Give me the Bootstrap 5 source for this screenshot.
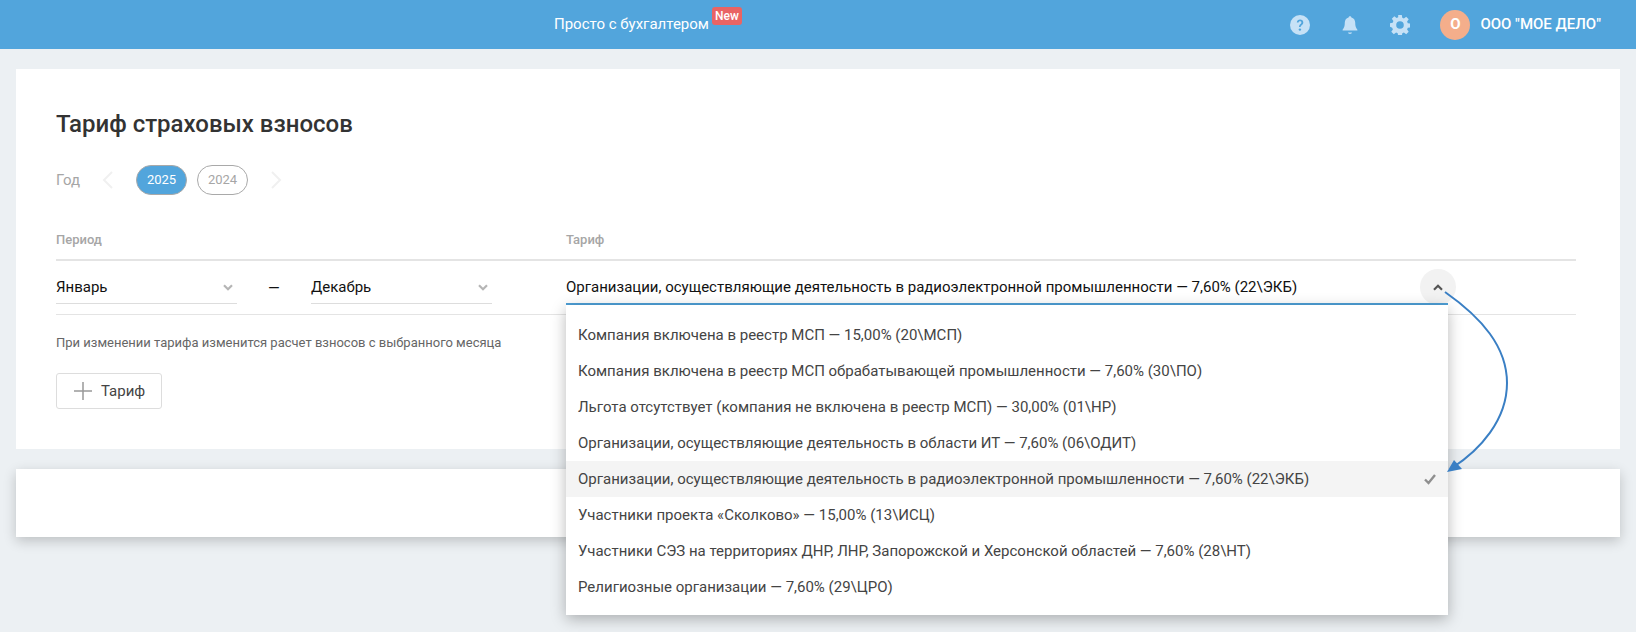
<!doctype html>
<html lang="ru"><head><meta charset="utf-8"><title>Тариф</title>
<link rel="stylesheet" href="https://cdn.jsdelivr.net/npm/bootstrap@5.3.0/dist/css/bootstrap.min.css">
<style>
html,body{height:632px;overflow:hidden}
body{background:#ecf0f3;font-family:Roboto,"Liberation Sans",sans-serif;color:#333;font-size:15px;position:relative}
.topbar{height:49px;background:#52a5dc;padding:0 35px 0 554px;color:#fff}
.promo{font-size:15px}
.newtag{background:#e96464;color:#fff;font-size:12px;font-weight:500;line-height:18px;height:18px;width:30px;text-align:center;border-radius:3px;margin-left:3px;margin-top:-17px}
.tool{width:20px;height:20px;margin-right:30px}
.ava{width:30px;height:30px;border-radius:50%;background:#f4ae8b;font-weight:700;font-size:15px;margin:0 10px 0 30px}
.cname{font-size:15px;font-weight:500;white-space:nowrap}
.sheet{background:#fff;margin:20px 16px 0}
.sheet-main{height:380px;padding:40px 44px 40px 40px}
.sheet-empty{height:68px;box-shadow:0 4px 12px rgba(0,0,0,.2)}
.ttl{font-size:24px;font-weight:500;line-height:28px;margin:0;color:#333;padding-top:1px}
.yearrow{margin-top:27px;height:30px;color:#a6a6a6}
.yearlbl{font-size:15px;width:44px}
.arrowbox{width:16px;height:20px;margin-right:20px}
.arrowbox-r{margin-left:10px}
.pill{width:51px;height:30px;border-radius:15px;border:1px solid #a9a9a9;font-size:13px;color:#a6a6a6;margin-right:10px;background:#fff}
.pill-on{background:#52a5dc;color:#fff}
.collbl{margin-top:33px;height:33px;border-bottom:2px solid #e4e4e4;font-size:13px;font-weight:500;color:#a6a6a6;padding-top:2px}
.lbl-a{width:510px}
.editrow{height:54px;border-bottom:1px solid #e4e4e4;color:#111;font-size:15px;padding-top:7px;align-items:flex-start}
.selbox{width:181px;height:36px;border-bottom:1px solid #ddd;flex:none;padding-top:4px}
.dash{width:74px;height:36px;padding:4px 0 0 31px;flex:none}
.gap-b{width:74px;flex:none}
.tarif{width:882px;height:37px;padding-top:1px;position:relative;flex:none;white-space:nowrap}
.tarif::after{content:"";position:absolute;left:0;right:0;bottom:0;height:2px;background:#4e9fd6}
.circ{position:absolute;right:-8px;top:1px;width:36px;height:36px;border-radius:50%;background:#f2f2f2}
.hint{margin-top:20px;font-size:13px;line-height:16px;color:#666}
.addbtn{margin-top:22px;width:106px;height:36px;border:1px solid #ddd;border-radius:3px;background:#fff;color:#444;font-size:15px;padding:0 0 0 17px;gap:9px}
.drop{position:absolute;left:566px;top:305px;width:882px;height:310px;background:#fff;padding:12px 0 10px;box-shadow:0 4px 14px rgba(0,0,0,.28);z-index:5}
.dropitem{height:36px;padding:0 12px;font-size:15px;color:#444}
.dropitem-on{background:#f4f4f4}
.curve{position:absolute;left:1430px;top:285px;width:90px;height:200px;z-index:6}
</style></head>
<body>
<header class="topbar d-flex align-items-center">
  <span class="promo">Просто с бухгалтером</span><span class="newtag">New</span>
  <div class="ms-auto d-flex align-items-center">
    <svg class="tool" viewBox="0 0 20 20"><circle cx="10" cy="10" r="10" fill="#c6e1f6"/><path d="M6.8 7.6C6.9 5.6 8.3 4.6 10.1 4.6c1.9 0 3.2 1.1 3.2 2.8 0 2.6-2.7 2.5-2.7 4.7H9c0-3 2.4-3 2.4-4.7 0-.7-.5-1.2-1.3-1.2-.9 0-1.4.5-1.5 1.4z" fill="#52a5dc"/><circle cx="9.9" cy="14.6" r="1.2" fill="#52a5dc"/></svg>
    <svg class="tool" viewBox="0 0 20 20"><path d="M10 1.2c.8 0 1.3.5 1.4 1.2 2.4.6 3.8 2.6 3.8 5.2 0 3.6.7 5.3 2.2 7.1v.8H2.6v-.8c1.5-1.8 2.2-3.5 2.2-7.1 0-2.6 1.4-4.6 3.8-5.2.1-.7.6-1.2 1.4-1.2z" fill="#c6e1f6"/><path d="M8 17.6h4c0 .9-.9 1.4-2 1.4s-2-.5-2-1.4z" fill="#c6e1f6"/></svg>
    <svg class="tool" style="margin-right:0" viewBox="0 0 20 20"><path fill-rule="evenodd" d="M8.2 0h3.6l.5 2.7 1.6.7 2.3-1.6 2.5 2.5-1.6 2.3.7 1.6 2.7.5v3.6l-2.7.5-.7 1.6 1.6 2.3-2.5 2.5-2.3-1.6-1.6.7-.5 2.7H8.2l-.5-2.7-1.6-.7-2.3 1.6-2.5-2.5 1.6-2.3-.7-1.6L0 11.8V8.2l2.7-.5.7-1.6-1.6-2.3 2.5-2.5 2.3 1.6 1.6-.7zM10 6.2a3.800 3.800 0 1 0 0 7.6 3.800 3.800 0 0 0 0-7.6z" fill="#c6e1f6"/></svg>
    <div class="ava d-flex align-items-center justify-content-center">О</div>
    <span class="cname">ООО "МОЕ ДЕЛО"</span>
  </div>
</header>
<section class="sheet sheet-main">
  <h1 class="ttl">Тариф страховых взносов</h1>
  <div class="yearrow d-flex align-items-center">
    <span class="yearlbl">Год</span>
    <svg class="arrowbox" viewBox="0 0 16 20"><path d="M12 2 4 10l8 8" fill="none" stroke="#f0f0f0" stroke-width="2"/></svg>
    <span class="pill pill-on d-flex align-items-center justify-content-center">2025</span>
    <span class="pill d-flex align-items-center justify-content-center">2024</span>
    <svg class="arrowbox arrowbox-r" viewBox="0 0 16 20"><path d="M4 2l8 8-8 8" fill="none" stroke="#f0f0f0" stroke-width="2"/></svg>
  </div>
  <div class="collbl d-flex"><span class="lbl-a">Период</span><span>Тариф</span></div>
  <div class="editrow d-flex">
    <div class="selbox d-flex align-items-center justify-content-between"><span>Январь</span>
      <svg width="10" height="7" class="me-1" viewBox="0 0 10 7"><path d="M1 1.2l4 4 4-4" fill="none" stroke="#b5b5b5" stroke-width="2.2"/></svg></div>
    <div class="dash d-flex align-items-center">—</div>
    <div class="selbox d-flex align-items-center justify-content-between"><span>Декабрь</span>
      <svg width="10" height="7" class="me-1" viewBox="0 0 10 7"><path d="M1 1.2l4 4 4-4" fill="none" stroke="#b5b5b5" stroke-width="2.2"/></svg></div>
    <div class="gap-b"></div>
    <div class="tarif d-flex align-items-center"><span>Организации, осуществляющие деятельность в радиоэлектронной промышленности — 7,60% (22\ЭКБ)</span>
      <div class="circ d-flex align-items-center justify-content-center"><svg width="10" height="7" viewBox="0 0 10 7"><path d="M1 5.800l4-4 4 4" fill="none" stroke="#555" stroke-width="2.2"/></svg></div></div>
  </div>
  <p class="hint mb-0">При изменении тарифа изменится расчет взносов с выбранного месяца</p>
  <button class="addbtn d-flex align-items-center" type="button"><svg width="18" height="18" viewBox="0 0 18 18"><path d="M9 0v18M0 9h18" stroke="#999" stroke-width="1.5"/></svg>Тариф</button>
</section>
<section class="sheet sheet-empty"></section>
<div class="drop">
  <div class="dropitem d-flex align-items-center">Компания включена в реестр МСП — 15,00% (20\МСП)</div>
  <div class="dropitem d-flex align-items-center">Компания включена в реестр МСП обрабатывающей промышленности — 7,60% (30\ПО)</div>
  <div class="dropitem d-flex align-items-center">Льгота отсутствует (компания не включена в реестр МСП) — 30,00% (01\НР)</div>
  <div class="dropitem d-flex align-items-center">Организации, осуществляющие деятельность в области ИТ — 7,60% (06\ОДИТ)</div>
  <div class="dropitem dropitem-on d-flex align-items-center justify-content-between">Организации, осуществляющие деятельность в радиоэлектронной промышленности — 7,60% (22\ЭКБ)
    <svg width="12" height="12" viewBox="0 0 12 12"><path d="M1 6.500l3.500 3.500L11 2" fill="none" stroke="#8f8f8f" stroke-width="2.400"/></svg></div>
  <div class="dropitem d-flex align-items-center">Участники проекта «Сколково» — 15,00% (13\ИСЦ)</div>
  <div class="dropitem d-flex align-items-center">Участники СЭЗ на территориях ДНР, ЛНР, Запорожской и Херсонской областей — 7,60% (28\НТ)</div>
  <div class="dropitem d-flex align-items-center">Религиозные организации — 7,60% (29\ЦРО)</div>
</div>
<svg class="curve" viewBox="0 0 90 200"><path d="M15 7C52 33 77 62 77 98 77 135 50 165 22 183" fill="none" stroke="#3a7fc4" stroke-width="2"/><path d="M17 187 24 175 32 184z" fill="#3a7fc4"/></svg>
</body></html>
